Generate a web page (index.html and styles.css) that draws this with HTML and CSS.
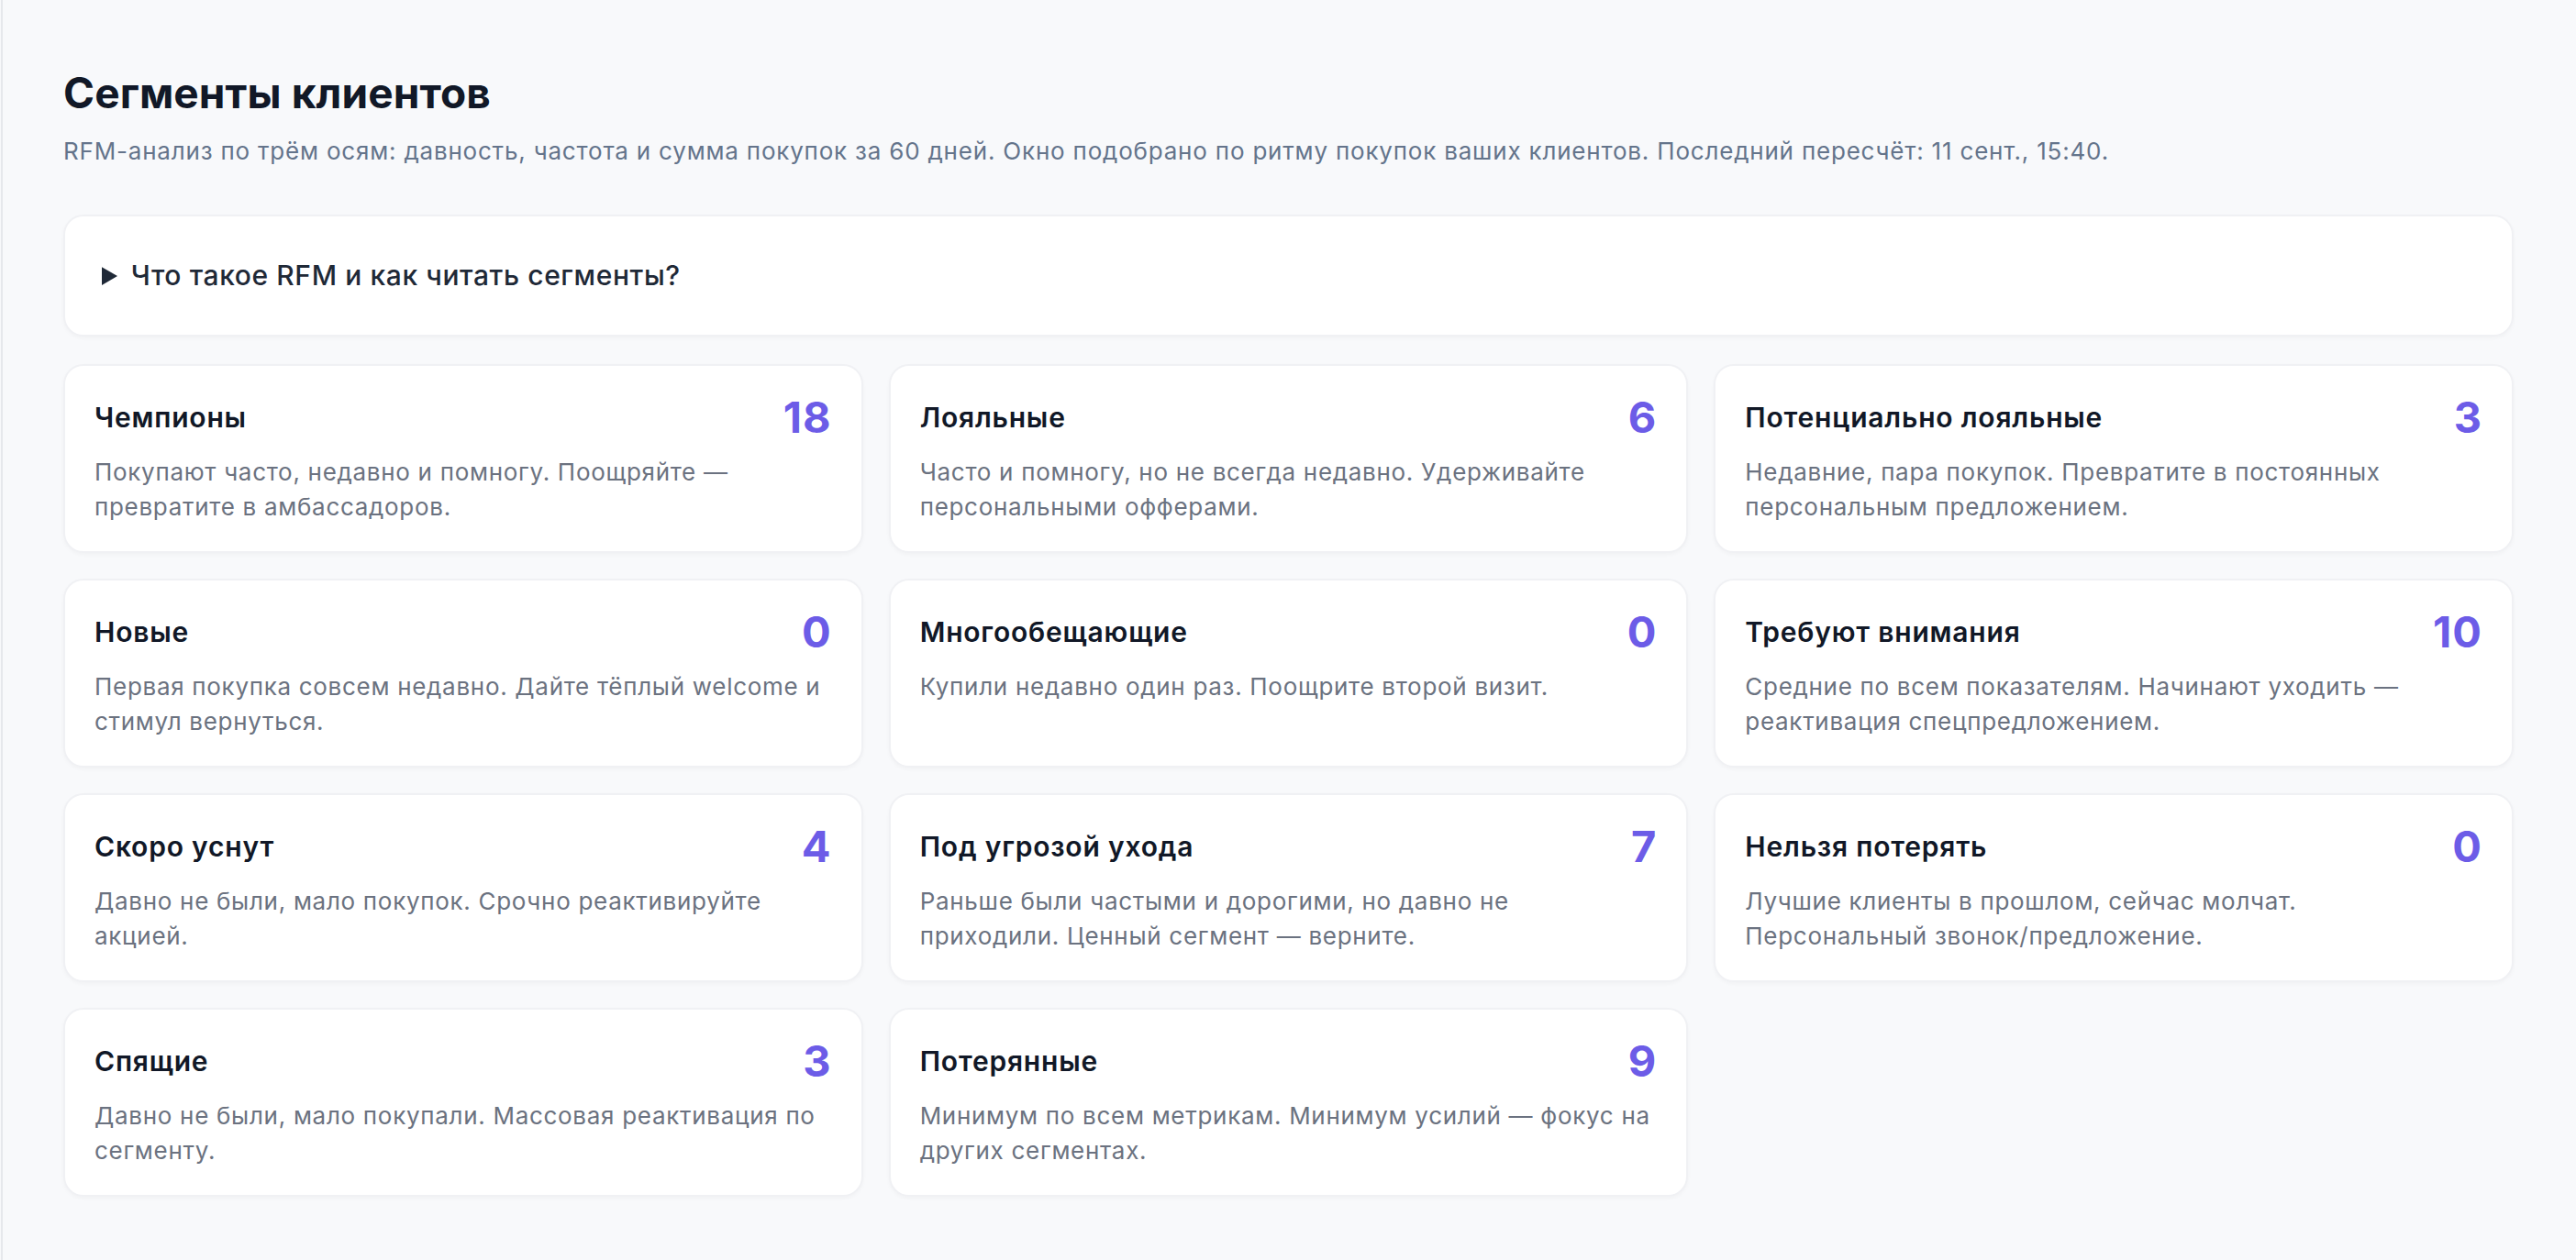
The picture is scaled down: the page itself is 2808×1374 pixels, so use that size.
FILE: index.html
```html
<!DOCTYPE html>
<html lang="ru">
<head>
<meta charset="utf-8">
<title>Сегменты клиентов</title>
<link rel="stylesheet" href="styles.css">
</head>
<body>
<main class="page">
  <h1 class="title">Сегменты клиентов</h1>
  <p class="subtitle">RFM-анализ по трём осям: давность, частота и сумма покупок за 60 дней. Окно подобрано по ритму покупок ваших клиентов. Последний пересчёт: 11 сент., 15:40.</p>

  <details class="help">
    <summary>Что такое RFM и как читать сегменты?</summary>
  </details>

  <section class="grid">
    <article class="card">
      <div class="card-head"><h2 class="card-title">Чемпионы</h2><span class="count">18</span></div>
      <p class="card-desc">Покупают часто, недавно и помногу. Поощряйте — превратите в амбассадоров.</p>
    </article>
    <article class="card">
      <div class="card-head"><h2 class="card-title">Лояльные</h2><span class="count">6</span></div>
      <p class="card-desc">Часто и помногу, но не всегда недавно. Удерживайте персональными офферами.</p>
    </article>
    <article class="card">
      <div class="card-head"><h2 class="card-title">Потенциально лояльные</h2><span class="count">3</span></div>
      <p class="card-desc">Недавние, пара покупок. Превратите в постоянных персональным предложением.</p>
    </article>
    <article class="card">
      <div class="card-head"><h2 class="card-title">Новые</h2><span class="count">0</span></div>
      <p class="card-desc">Первая покупка совсем недавно. Дайте тёплый welcome и стимул вернуться.</p>
    </article>
    <article class="card">
      <div class="card-head"><h2 class="card-title">Многообещающие</h2><span class="count">0</span></div>
      <p class="card-desc">Купили недавно один раз. Поощрите второй визит.</p>
    </article>
    <article class="card">
      <div class="card-head"><h2 class="card-title">Требуют внимания</h2><span class="count">10</span></div>
      <p class="card-desc">Средние по всем показателям. Начинают уходить — реактивация спецпредложением.</p>
    </article>
    <article class="card">
      <div class="card-head"><h2 class="card-title">Скоро уснут</h2><span class="count">4</span></div>
      <p class="card-desc">Давно не были, мало покупок. Срочно реактивируйте акцией.</p>
    </article>
    <article class="card">
      <div class="card-head"><h2 class="card-title">Под угрозой ухода</h2><span class="count">7</span></div>
      <p class="card-desc">Раньше были частыми и дорогими, но давно не приходили.&nbsp;Ценный сегмент — верните.</p>
    </article>
    <article class="card">
      <div class="card-head"><h2 class="card-title">Нельзя потерять</h2><span class="count">0</span></div>
      <p class="card-desc">Лучшие клиенты в прошлом, сейчас молчат. Персональный&nbsp;звонок/предложение.</p>
    </article>
    <article class="card">
      <div class="card-head"><h2 class="card-title">Спящие</h2><span class="count">3</span></div>
      <p class="card-desc">Давно не были, мало покупали. Массовая реактивация по сегменту.</p>
    </article>
    <article class="card">
      <div class="card-head"><h2 class="card-title">Потерянные</h2><span class="count">9</span></div>
      <p class="card-desc">Минимум по всем метрикам. Минимум усилий — фокус на других сегментах.</p>
    </article>
  </section>
</main>
</body>
</html>
```

FILE: styles.css
```css
html, body {
  margin: 0;
  padding: 0;
  background: #f8f9fb;
}

body {
  font-family: Inter, "Noto Sans", "Liberation Sans", sans-serif;
  color: #111827;
}

.page {
  box-sizing: border-box;
  min-height: 100vh;
  margin-left: 1px;
  border-left: 2px solid #e6e8ec;
  padding: 74px 68px 40px 66px;
}

.title {
  margin: 0;
  font-size: 46px;
  line-height: 55px;
  font-weight: 700;
  color: #111827;
  letter-spacing: 0.1px;
}

.subtitle {
  margin: 17px 0 0;
  font-size: 26px;
  line-height: 38px;
  letter-spacing: 0.8px;
  color: #64748b;
}

.help {
  margin-top: 50px;
  background: #fff;
  border: 2px solid #f0f1f4;
  border-radius: 22px;
  box-shadow: 0 2px 4px rgba(17, 24, 39, 0.03);
  padding: 43px 40px;
}

.help summary {
  font-size: 30px;
  line-height: 43px;
  font-weight: 500;
  letter-spacing: 0.6px;
  color: #1f2937;
  cursor: pointer;
}

.grid {
  margin-top: 30px;
  display: grid;
  grid-template-columns: repeat(3, 1fr);
  gap: 28px;
}

.card {
  background: #fff;
  border: 2px solid #f0f1f4;
  border-radius: 22px;
  box-shadow: 0 2px 4px rgba(17, 24, 39, 0.03);
  padding: 28px 32px 28px;
  min-height: 206px;
  box-sizing: border-box;
}

.card-head {
  display: flex;
  align-items: center;
  justify-content: space-between;
  gap: 16px;
}

.card-title {
  margin: 0;
  font-size: 30px;
  line-height: 40px;
  font-weight: 600;
  letter-spacing: 0.8px;
  color: #111827;
}

.count {
  font-size: 47px;
  line-height: 56px;
  font-weight: 700;
  letter-spacing: 1px;
  color: #6c5ce7;
}

.card-desc {
  margin: 13px 0 0;
  font-size: 26px;
  line-height: 38px;
  letter-spacing: 0.7px;
  color: #6b7280;
}
```
